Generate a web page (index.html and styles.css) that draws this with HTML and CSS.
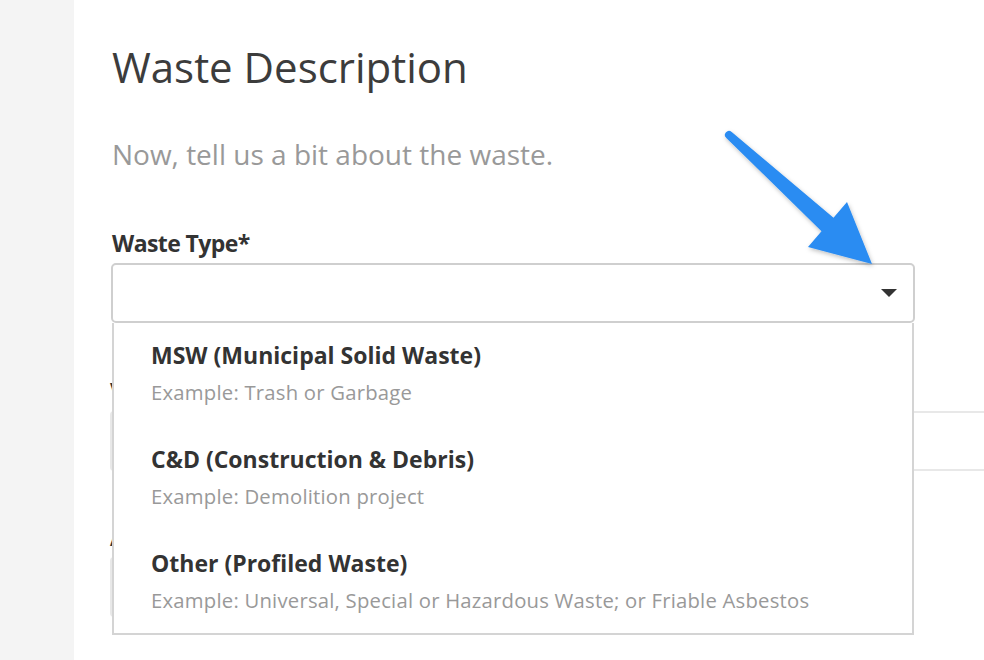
FILE: index.html
```html
<!DOCTYPE html>
<html lang="en">
<head>
<meta charset="utf-8">
<title>Waste Description</title>
<link rel="stylesheet" href="styles.css">
</head>
<body>
<aside class="sidebar"></aside>
<main class="main">
  <h1 class="title">Waste Description</h1>
  <p class="lead">Now, tell us a bit about the waste.</p>

  <div class="field first">
    <label class="label">Waste Type*</label>
    <div class="select-wrap">
      <div class="select">
        <span class="caret"></span>
      </div>
      <ul class="menu">
        <li class="option">
          <div class="opt-title">MSW (Municipal Solid Waste)</div>
          <div class="opt-sub">Example: Trash or Garbage</div>
        </li>
        <li class="option">
          <div class="opt-title">C&amp;D (Construction &amp; Debris)</div>
          <div class="opt-sub">Example: Demolition project</div>
        </li>
        <li class="option">
          <div class="opt-title">Other (Profiled Waste)</div>
          <div class="opt-sub">Example: Universal, Special or Hazardous Waste; or Friable Asbestos</div>
        </li>
      </ul>
    </div>
  </div>

  <div class="field under one">
    <label class="label">V</label>
    <div class="input wide"></div>
  </div>
  <div class="field under two">
    <label class="label">A</label>
    <div class="input"></div>
  </div>
</main>

<svg class="pointer" width="984" height="660" viewBox="0 0 984 660" aria-hidden="true">
  <defs>
    <filter id="sh" x="-20%" y="-20%" width="140%" height="140%">
      <feDropShadow dx="1" dy="2" stdDeviation="2" flood-color="#000" flood-opacity="0.25"/>
    </filter>
  </defs>
  <path filter="url(#sh)" fill="#2a8cf2" d="M731.7,132 L833.5,217.8 L847,202 L872,264 L808,247 L821.5,231.2 L726.3,138 A4,4 0 0 1 731.7,132 Z"/>
</svg>
</body>
</html>
```
FILE: styles.css
```css
html, body {
  margin: 0;
  padding: 0;
}
body {
  width: 984px;
  height: 660px;
  overflow: hidden;
  display: flex;
  background: #fff;
  font-family: "Open Sans", "Noto Sans", sans-serif;
  color: #3a3a3a;
  position: relative;
}
.sidebar {
  width: 74px;
  flex: none;
  background: #f4f4f4;
}
.main {
  flex: 1;
  padding: 37px 0 0 38px;
  display: flex;
  flex-direction: column;
  min-width: 0;
  overflow: hidden;
}
.title {
  margin: 0;
  font-weight: 400;
  font-size: 42px;
  line-height: 60px;
  color: #3c3c3c;
}
.lead {
  margin: 39px 0 0;
  font-size: 28px;
  line-height: 36px;
  color: #999;
}
.field {
  display: flex;
  flex-direction: column;
}
.field.first {
  margin-top: 54px;
}
.field.one {
  margin-top: 51px;
}
.field.two {
  margin-top: 49px;
}
.label {
  font-weight: 700;
  font-size: 23px;
  letter-spacing: -0.6px;
  line-height: 34px;
  color: #333;
  margin-bottom: 3px;
}
.select-wrap {
  position: relative;
  width: 804px;
  margin-left: -1px;
}
.select {
  height: 56px;
  border: 2px solid #cfcfcf;
  border-radius: 5px;
  display: flex;
  align-items: center;
  justify-content: flex-end;
  padding-right: 16px;
}
.caret {
  width: 0;
  height: 0;
  border-left: 8px solid transparent;
  border-right: 8px solid transparent;
  border-top: 8px solid #333;
}
.menu {
  position: absolute;
  top: 60px;
  left: 1px;
  width: 798px;
  margin: 0;
  padding: 0;
  list-style: none;
  background: #fff;
  border: 2px solid #d4d4d4;
  border-top: none;
  z-index: 5;
}
.option {
  padding: 14px 37px 16px;
}
.option:last-child {
  padding-bottom: 14px;
}
.opt-title {
  font-weight: 700;
  font-size: 23px;
  line-height: 36px;
  color: #333;
}
.opt-sub {
  font-size: 20.3px;
  letter-spacing: 0.22px;
  line-height: 38px;
  color: #999;
}
.under .label {
  margin-left: -2px;
}
.input {
  height: 56px;
  width: 760px;
  margin-left: -2px;
  border: 2px solid #e8e8e8;
  border-radius: 4px;
}
.input.wide {
  width: 940px;
}
.pointer {
  position: absolute;
  left: 0;
  top: 0;
  z-index: 10;
  pointer-events: none;
}
```
